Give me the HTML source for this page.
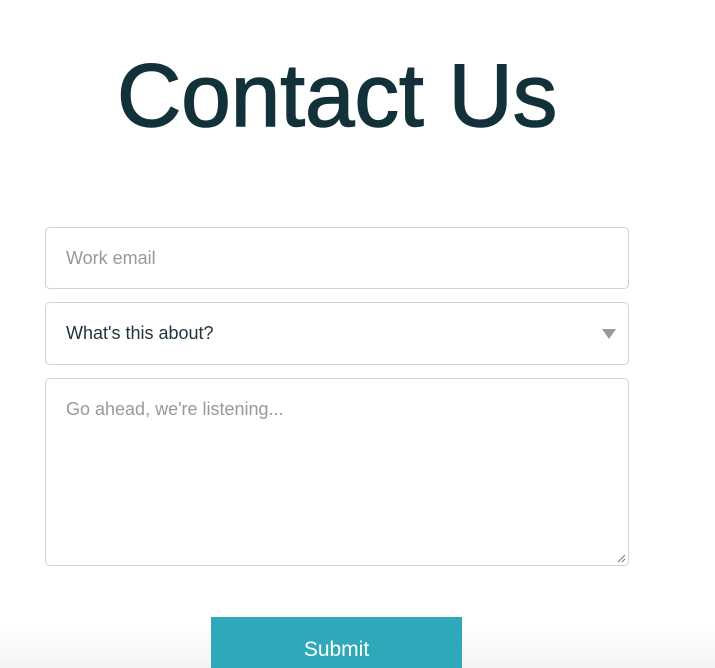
<!DOCTYPE html>
<html><head><style>
html,body{margin:0;width:715px;height:668px;overflow:hidden;background:#fff;font-family:"Liberation Sans",sans-serif;position:relative}
.bg{position:absolute;left:0;right:0;top:625px;height:43px;background:linear-gradient(#fff,#f3f3f3)}
h1{position:absolute;left:117px;top:40px;margin:0;font-weight:normal;font-size:89px;color:#133139;line-height:110px;white-space:nowrap;-webkit-text-stroke:1.5px #133139}
.f{position:absolute;left:45px;width:584px;border:1px solid #d2d2d2;border-radius:5px;box-sizing:border-box;font-size:18px;color:#999;padding-left:20px}
.btn{position:absolute;left:211px;top:617px;width:251px;height:51px;background:#2fa8b9;color:#fff;font-size:21px;text-align:center;line-height:66px;overflow:hidden}
</style></head><body>
<div class="bg"></div>
<h1>Contact Us</h1>
<div class="f" style="top:227px;height:62px;line-height:60px">Work email</div>
<div class="f" style="top:302px;height:63px;line-height:61px;color:#1e343a">What's this about?
<div style="position:absolute;right:12px;top:26px;width:0;height:0;border-left:7px solid transparent;border-right:7px solid transparent;border-top:10px solid #999"></div></div>
<div class="f" style="top:378px;height:188px;line-height:normal;padding-top:20px">Go ahead, we're listening...
<svg style="position:absolute;right:2px;bottom:2px" width="9" height="9"><path d="M1 8L8 1M5 8L8 5" stroke="#777" stroke-width="1"/></svg></div>
<div class="btn">Submit</div>
</body></html>
